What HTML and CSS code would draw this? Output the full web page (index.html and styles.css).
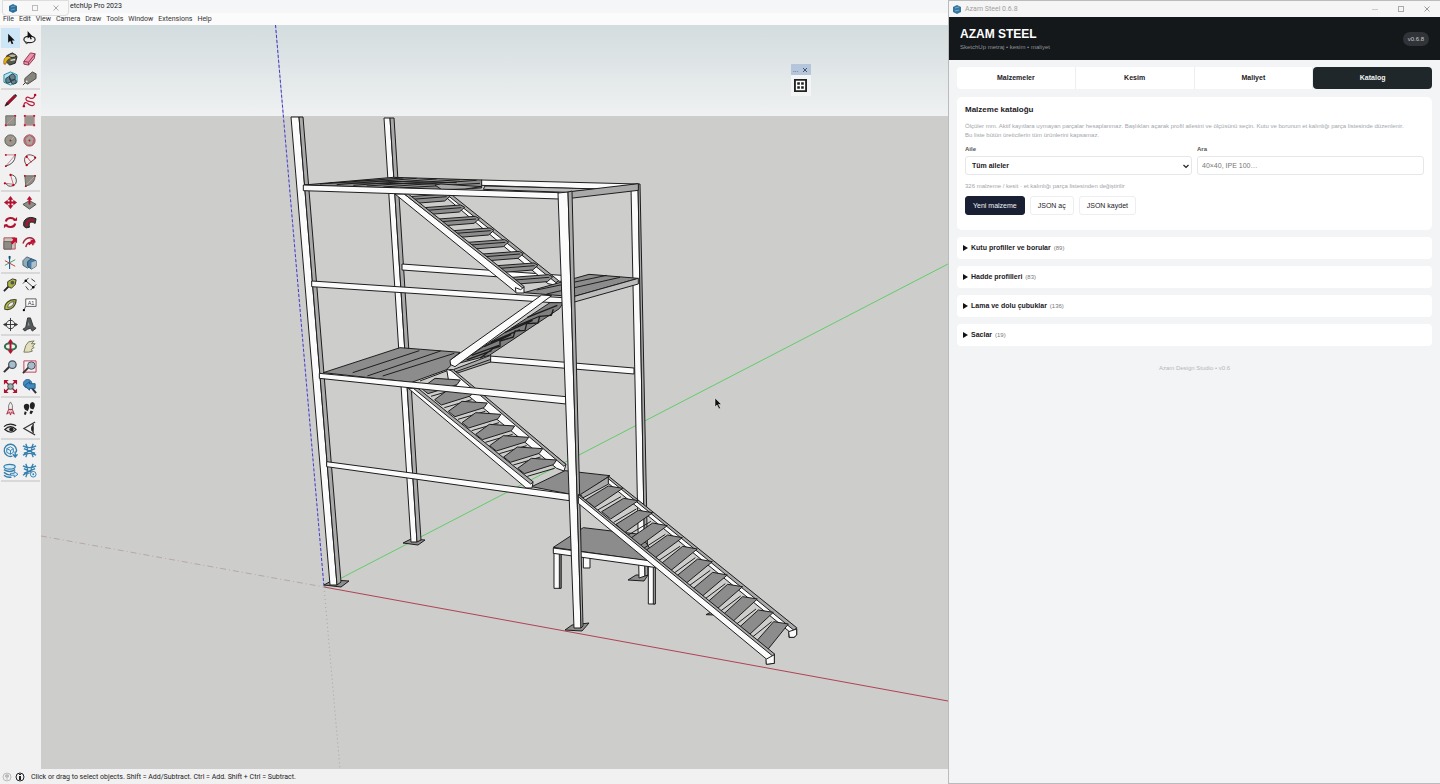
FILE: index.html
```html
<!DOCTYPE html>
<html lang="tr">
<head>
<meta charset="utf-8">
<meta name="viewport" content="width=device-width, initial-scale=1">
<title>SketchUp Pro 2023 – Azam Steel</title>
<link rel="stylesheet" href="styles.css">
</head>
<body>
<div class="desktop">
  <section class="modeler" lang="en">
    <header class="modeler-title">etchUp Pro 2023</header>
    <div class="mini-window">
      <svg class="glyph" viewBox="0 0 12 12"><path d="M6 2l4 2v5l-4 2-4-2V4z" fill="#2f6f9b"/><path d="M4 5l4-1M4 8l4-1" stroke="#6ca4c6"/></svg>
      <button type="button" aria-label="Restore"><svg class="glyph" viewBox="0 0 12 12"><rect x="3.500" y="3.500" width="5" height="5" fill="none" stroke="#bbb"/></svg></button>
      <button type="button" aria-label="Close"><svg class="glyph" viewBox="0 0 12 12"><path d="M3.500 3.500l5 5M8.500 3.500l-5 5" stroke="#aaa"/></svg></button>
    </div>
    <nav class="menu">
      <button type="button">File</button><button type="button">Edit</button><button type="button">View</button><button type="button">Camera</button><button type="button">Draw</button><button type="button">Tools</button><button type="button">Window</button><button type="button">Extensions</button><button type="button">Help</button>
    </nav>
    <div class="work">
      <aside class="tools">
        <div class="tool-group">
          <button type="button" class="active" aria-label="Select"><svg viewBox="0 0 16 16"><path d="M5.500 3v9.500l2.300-2 1.500 3.500 1.700-.8-1.500-3.200h3z" fill="#111"/></svg></button>
          <button type="button" aria-label="Lasso"><svg viewBox="0 0 16 16"><ellipse cx="8" cy="9" rx="6" ry="3.500" fill="none" stroke="#222" stroke-width="1.300"/><path d="M3 12q2 3 4 0" fill="none" stroke="#222"/><path d="M6 0v8l2-1.500 1.200 2.500 1.300-.6-1-2.400h2z" fill="#111"/></svg></button>
          <button type="button" aria-label="Paint Bucket"><svg viewBox="0 0 16 16"><path d="M4 5l6-3 5 4-2 7-6 2-4-4z" fill="#555b49" stroke="#222"/><ellipse cx="10" cy="5" rx="4" ry="2" fill="#b5b9a0" stroke="#222"/><path d="M1 14c-1-6 2-9 6-8l2 2c-4 0-5 2-6 6z" fill="#e8b11c" stroke="#674c05" stroke-width=".6"/><path d="M8 10l5-1" stroke="#ddd" stroke-width="1.500"/></svg></button>
          <button type="button" aria-label="Eraser"><svg viewBox="0 0 16 16"><path d="M2 11l7-9 5 1-1 5-6 7-5-1z" fill="#ec91aa" stroke="#8e3450"/><path d="M2 11l5 1 7-9M7 12v3" fill="none" stroke="#8e3450"/></svg></button>
          <button type="button" aria-label="Components"><svg viewBox="0 0 16 16"><path d="M1 4l7-3 7 3v8l-7 3-7-3z" fill="#b5e3ef" stroke="#238aa5"/><path d="M3 8l3-2 2 2v4l-3 1-2-1zM7 5l3-2 3 2v4l-3 1-3-1zM9 10l3-1 2 1v3l-3 1-2-1z" fill="#64818c" stroke="#243d48"/></svg></button>
          <button type="button" aria-label="Tag"><svg viewBox="0 0 16 16"><path d="M1 15l3-3" stroke="#333"/><path d="M3 8l8-7 4 2v5l-9 6-3-2z" fill="#85857d" stroke="#4b4b45"/><circle cx="5" cy="11" r="1" fill="#eee"/></svg></button>
        </div>
        <div class="tool-group">
          <button type="button" aria-label="Line"><svg viewBox="0 0 16 16"><path d="M2 14l2-4 8-8 2 2-8 8z" fill="#a80c28" stroke="#42151d" stroke-width=".6"/><path d="M2 14l2-4 2 2zM12 2l2 2 1-1-2-2z" fill="#222"/></svg></button>
          <button type="button" aria-label="Freehand"><svg viewBox="0 0 16 16"><path d="M2 14c0-5 3-4 5-2s7 2 6-1-6-1-8-3 0-5 3-3 6 0 6-4" fill="none" stroke="#b91e3d" stroke-width="1.300"/><circle cx="2" cy="14" r="1.300" fill="#b00b2c"/><circle cx="14" cy="2" r="1.300" fill="#b00b2c"/></svg></button>
          <button type="button" aria-label="Rectangle"><svg viewBox="0 0 16 16"><path d="M3 3h10v10H3z" fill="#96968e" stroke="#66665f"/><path d="M3 13L13 3" stroke="#c8a09f"/><path d="M2 12h2v2H2zM12 2h2v2h-2z" fill="#c1193a"/></svg></button>
          <button type="button" aria-label="Rotated Rectangle"><svg viewBox="0 0 16 16"><path d="M3 3h10v10H3z" fill="#96968e" stroke="#c8808d"/><path d="M2 2h2v2H2zM2 12h2v2H2zM12 12h2v2h-2zM12 2h2v2h-2z" fill="#c1193a"/></svg></button>
          <button type="button" aria-label="Circle"><svg viewBox="0 0 16 16"><circle cx="8" cy="8" r="6" fill="#97978d" stroke="#55554f"/><path d="M8 8l4-4" stroke="#c9ada8"/><circle cx="8" cy="8" r="1" fill="#a22"/></svg></button>
          <button type="button" aria-label="Polygon"><svg viewBox="0 0 16 16"><circle cx="8" cy="8" r="6" fill="#97978d" stroke="#a44a5a"/><path d="M8 2l5 4-2 7H5L3 6z" fill="#aaa198" stroke="#cb4660" stroke-width=".8"/><circle cx="8" cy="8" r="1" fill="#a22"/></svg></button>
          <button type="button" aria-label="Arc"><svg viewBox="0 0 16 16"><path d="M3 2h10L3 14" fill="none" stroke="#c38390"/><path d="M13 3q0 8-10 11" fill="none" stroke="#444"/><circle cx="3" cy="2" r="1" fill="#b01"/><circle cx="13" cy="2" r="1" fill="#b01"/><circle cx="3" cy="14" r="1" fill="#b01"/></svg></button>
          <button type="button" aria-label="Two Point Arc"><svg viewBox="0 0 16 16"><path d="M5 13C0 7 4 1 9 2s6 3 5 4z" fill="none" stroke="#6e3440"/><path d="M5 4l5 6" stroke="#c34158"/><circle cx="5" cy="13" r="1.200" fill="#b01"/><circle cx="14" cy="5" r="1.200" fill="#b01"/><circle cx="5" cy="4" r="1.200" fill="#b01"/></svg></button>
          <button type="button" aria-label="Three Point Arc"><svg viewBox="0 0 16 16"><path d="M8 2a6 6 0 1 1-5 9" fill="none" stroke="#444"/><path d="M8 2l3 10-9-1" fill="none" stroke="#c66b7b"/><circle cx="8" cy="2" r="1.200" fill="#b01"/><circle cx="11" cy="13" r="1.200" fill="#b01"/><circle cx="2" cy="11" r="1.200" fill="#b01"/></svg></button>
          <button type="button" aria-label="Pie"><svg viewBox="0 0 16 16"><path d="M3 3h11q0 9-10 11z" fill="#8e8e86" stroke="#66665f"/><path d="M5 12l8-8" stroke="#c9a4a4"/><circle cx="3" cy="3" r="1" fill="#b01"/><circle cx="14" cy="3" r="1" fill="#b01"/><circle cx="4" cy="14" r="1" fill="#b01"/></svg></button>
        </div>
        <div class="tool-group">
          <button type="button" aria-label="Move"><svg viewBox="0 0 16 16"><path d="M8 1l3 4H9v2h2V5l4 3-4 3V9H9v2h2l-3 4-3-4h2V9H5v2L1 8l4-3v2h2V5H5z" fill="#b1122f"/></svg></button>
          <button type="button" aria-label="Push Pull"><svg viewBox="0 0 16 16"><path d="M1 10l7-4 7 4-7 5z" fill="#8d9087" stroke="#4d504a"/><path d="M8 1l3 4H9v5H7V5H5z" fill="#b1122f"/></svg></button>
          <button type="button" aria-label="Rotate"><svg viewBox="0 0 16 16"><path d="M3 7c1-5 8-5 10-1M13 9c-1 5-8 5-10 1" fill="none" stroke="#b1122f" stroke-width="2.200"/><path d="M11 6h4V2zM5 10H1v4z" fill="#b1122f"/></svg></button>
          <button type="button" aria-label="Follow Me"><svg viewBox="0 0 16 16"><path d="M2 12C0 5 7 0 15 4l-1 5C9 6 7 8 8 13q-4 2-6-1z" fill="#4a3839" stroke="#222"/><path d="M5 12C4 7 8 4 13 6" fill="none" stroke="#b1122f" stroke-width="2"/></svg></button>
          <button type="button" aria-label="Scale"><svg viewBox="0 0 16 16"><path d="M1 3h12v12H1z" fill="#c9c6b9" stroke="#b44b5a"/><path d="M1 7h8v8H1z" fill="#8d8d84" stroke="#666"/><path d="M8 8l3-3-2-2h6v6l-2-2-3 3z" fill="#c00f30"/></svg></button>
          <button type="button" aria-label="Offset"><svg viewBox="0 0 16 16"><path d="M1 9C4 1 12 1 14 8M4 13c1-5 6-7 8-2" fill="none" stroke="#9c2739" stroke-width="1.500"/><path d="M6 9l4-3-2-1h6l-1 5-2-2-3 3z" fill="#c00f30"/></svg></button>
          <button type="button" aria-label="Axes"><svg viewBox="0 0 16 16"><path d="M7 1v14" stroke="#2a5d9d" stroke-width="1.200"/><path d="M2 11l11-6" stroke="#3a9a5e"/><path d="M2 6l11 6" stroke="#b33"/><path d="M6 1h2v3H6z" fill="#156"/></svg></button>
          <button type="button" aria-label="Outer Shell"><svg viewBox="0 0 16 16"><path d="M1 6l4-4 5 2v7l-4 3-5-3z" fill="#8faab9" stroke="#496371"/><path d="M6 7l4-3 5 2v6l-5 3-4-3z" fill="#487ca5" stroke="#28506f"/><path d="M10 8l5-2v6l-5 3z" fill="#b1bfc6"/></svg></button>
        </div>
        <div class="tool-group">
          <button type="button" aria-label="Tape Measure"><svg viewBox="0 0 16 16"><path d="M1 15l6-6" stroke="#222" stroke-width="2"/><path d="M5 5l5-3 4 1-1 5-4 4-4-2z" fill="#aeb63a" stroke="#333"/><circle cx="10" cy="6" r="2" fill="#555"/></svg></button>
          <button type="button" aria-label="Dimensions"><svg viewBox="0 0 16 16"><path d="M4 4l8 7M1 7l6-6M9 14l6-6M4 10l3 4M10 2l4 3" stroke="#333" fill="none"/><circle cx="4" cy="4" r="1.300"/><circle cx="12" cy="11" r="1.300"/></svg></button>
          <button type="button" aria-label="Protractor"><svg viewBox="0 0 16 16"><path d="M2 13C1 7 7 2 14 3c0 6-5 12-12 10z" fill="#b7bd49" stroke="#454822" stroke-width="1.200"/><path d="M5 11c0-3 3-6 7-6-1 4-3 6-7 6z" fill="#eee" stroke="#555"/></svg></button>
          <button type="button" aria-label="Text"><svg viewBox="0 0 16 16"><path d="M4 2h11v8H4zM4 10l-2 4" fill="#fff" stroke="#555"/><circle cx="2" cy="14" r="1.200"/><text x="6" y="8" font-size="6" font-family="Liberation Sans, sans-serif" fill="#333">A1</text></svg></button>
          <button type="button" aria-label="Section Plane"><svg viewBox="0 0 16 16"><circle cx="8" cy="8" r="4.500" fill="none" stroke="#333"/><path d="M1 8h14M8 1v14" stroke="#333"/><path d="M0 8l3-2v4zM16 8l-3-2v4z" fill="#333"/></svg></button>
          <button type="button" aria-label="3D Text"><svg viewBox="0 0 16 16"><path d="M6 1h3l3 9 3 2-4 3-2-3-3 1-3 2-2-2 3-2z" fill="#555b5b" stroke="#333"/><path d="M7 5l1 4H6z" fill="#999"/></svg></button>
        </div>
        <div class="tool-group">
          <button type="button" aria-label="Orbit"><svg viewBox="0 0 16 16"><ellipse cx="8" cy="8" rx="6" ry="3.500" fill="none" stroke="#32724d" stroke-width="2.200"/><path d="M8 2v12" fill="none" stroke="#b1122f" stroke-width="2"/><path d="M5 4l3-4 3 4zM5 12h6l-3 4z" fill="#b1122f"/></svg></button>
          <button type="button" aria-label="Pan"><svg viewBox="0 0 16 16"><path d="M2 14l2-7 3-4 6-1-3 3 4 0-3 3 2 1-3 2 1 2-4 1z" fill="#e1dfbd" stroke="#77775b"/></svg></button>
          <button type="button" aria-label="Zoom"><svg viewBox="0 0 16 16"><path d="M1 14l6-6" stroke="#333" stroke-width="2.200"/><circle cx="10" cy="6" r="4" fill="#a9bccb" stroke="#3f4f5b" stroke-width="1.300"/></svg></button>
          <button type="button" aria-label="Zoom Window"><svg viewBox="0 0 16 16"><path d="M2 2h13v12H2z" fill="none" stroke="#c43a54"/><path d="M1 15l6-6" stroke="#333" stroke-width="2"/><circle cx="10" cy="7" r="4" fill="#a9bccb" stroke="#3f4f5b"/></svg></button>
          <button type="button" aria-label="Zoom Extents"><svg viewBox="0 0 16 16"><path d="M3 3l10 10M13 3L3 13" stroke="#9c1632" stroke-width="1.500"/><path d="M1 1h5L1 6zM15 1v5l-5-5zM1 15v-5l5 5zM15 15h-5l5-5z" fill="#b1122f"/><circle cx="8" cy="8" r="3" fill="#9aafad" stroke="#3d4d4b"/></svg></button>
          <button type="button" aria-label="Previous"><svg viewBox="0 0 16 16"><path d="M10 9l5 6" stroke="#333" stroke-width="2.200"/><circle cx="6" cy="5" r="4.500" fill="#428abf" stroke="#2c618c"/><path d="M3 7l5-4v2h6v5H8v2z" fill="#428abf" stroke="#235b87"/></svg></button>
        </div>
        <div class="tool-group">
          <button type="button" aria-label="Position Camera"><svg viewBox="0 0 16 16"><path d="M8 1q3 3 2 8H6Q5 4 8 1z" fill="#eee" stroke="#777"/><path d="M6 9l-2 5 3-2 1 3 1-3 3 2-2-5z" fill="#eec0c7" stroke="#a62b41"/></svg></button>
          <button type="button" aria-label="Walk"><svg viewBox="0 0 16 16"><path d="M5 3c4 0 3 5 1 8L3 9C1 6 2 3 5 3zM3 11l2 1-1 3-2-1zM11 1c4 1 3 5 1 8L9 8C8 5 8 2 11 1zM9 10l3 1-2 3-2-1z" fill="#222"/></svg></button>
          <button type="button" aria-label="Look Around"><svg viewBox="0 0 16 16"><path d="M1 6c4-4 10-3 13-1M2 9q6-6 12 0-5 6-12 0z" fill="#ddd" stroke="#222" stroke-width="1.300"/><circle cx="9" cy="9" r="2.300" fill="#222"/></svg></button>
          <button type="button" aria-label="Field of View"><svg viewBox="0 0 16 16"><path d="M14 1L2 8l12 7" fill="none" stroke="#333" stroke-width="1.300"/><path d="M12 3q-3 5 0 10z" fill="#eee" stroke="#333"/><ellipse cx="11" cy="8" rx="1.300" ry="3" fill="#222"/></svg></button>
        </div>
        <div class="tool-group">
          <button type="button" aria-label="3D Warehouse"><svg viewBox="0 0 16 16"><path d="M10 14a6.500 6.500 0 1 1 4-4" fill="none" stroke="#347fae" stroke-width="1.500"/><path d="M4 6l4-2 3 2v4l-3 2-4-2zM4 6l4 2 3-2M8 8v4" fill="#deeff8" stroke="#347fae"/><path d="M13 9v5M10.500 12l2.500 3 2.500-3" fill="none" stroke="#347fae" stroke-width="1.500"/></svg></button>
          <button type="button" aria-label="Extension Warehouse"><svg viewBox="0 0 16 16"><path d="M1 3q7 4 14 0M1 13q7-4 14 0M2 6l12 5M14 6L2 11M4 1q4 7 0 14M12 1q-4 7 0 14" fill="none" stroke="#347fae" stroke-width="1.400"/></svg></button>
          <button type="button" aria-label="Send to LayOut"><svg viewBox="0 0 16 16"><ellipse cx="7" cy="4" rx="6" ry="2.500" fill="#d5ebf6" stroke="#347fae" stroke-width="1.300"/><path d="M1 7q6 4 12 0M1 10q5 4 8 2M1 13q4 3 8 2" fill="none" stroke="#347fae" stroke-width="1.500"/><path d="M8 11h4V9l4 3-4 3v-2H8z" fill="#d5ebf6" stroke="#347fae"/></svg></button>
          <button type="button" aria-label="Extension Manager"><svg viewBox="0 0 16 16"><path d="M1 3q7 4 14 0M1 13q4-3 7-2M2 6l8 4M14 6L2 11M4 1q4 7 0 14M12 1q-3 5-2 8" fill="none" stroke="#347fae" stroke-width="1.400"/><circle cx="12" cy="12" r="3" fill="#e5f4fa" stroke="#347fae"/><circle cx="12" cy="12" r="1" fill="#347fae"/></svg></button>
        </div>
      </aside>
      <main class="viewport">
        <svg class="scene" viewBox="41 25 907 744" preserveAspectRatio="xMidYMid slice" role="img" aria-label="Steel staircase model">
          <defs>
            <linearGradient id="sky" x1="0" y1="0" x2="0" y2="1"><stop offset="0" stop-color="#d3dcde"/><stop offset="1" stop-color="#eff1f2"/></linearGradient>
            <g id="treadA"><path d="M0 0l110-8 12 7-16 14-88 7z"/><path d="M8 8l104-8" fill="none"/></g>
            <g id="treadB"><path d="M0 0l-76-5-41 30 20 16 87-27z"/><path d="M-88 49l82-24" fill="none"/></g>
          </defs>
          <rect x="-400" y="25" width="1800" height="91" fill="url(#sky)"/>
          <rect x="-400" y="116" width="1800" height="900" fill="#cdcdcb"/>
          <g fill="none">
            <path d="M275.500 25L324 587" stroke="#b8b8e4"/>
            <path d="M275.500 25L324 587" stroke="#4540b8" stroke-dasharray="3 2"/>
            <path d="M324 587L948 264" stroke="#62cc6a"/>
            <path d="M324 587L948 701" stroke="#b04253"/>
            <path d="M324 587L340 769" stroke="#a5a5b2" stroke-dasharray="1 3"/>
            <path d="M41 536L324 587" stroke="#b7a7a5" stroke-dasharray="6 3 1 3"/>
          </g>
          <g class="solid">
            <!-- rear uprights -->
            <path class="dark" d="M403 543l8-4 14 1-7 5z"/>
            <path class="face" d="M384 118h6l27 424h-6z"/><path class="side" d="M390 118h4l27 422-4 2z"/>
            <path class="dark" d="M628 580l8-5h12l-4 6z"/>
            <path class="face" d="M631 187l7-3 7 392-6 2z"/><path class="side" d="M638 184h2l8 391-3 1z"/>
            <!-- rear beams -->
            <path class="face" d="M402 264l169 12v6l-169-12z"/>
            <path class="face" d="M490 356l144 12v6l-144-12z"/>
            <!-- front left upright -->
            <path class="dark" d="M324 585l9-5 16 1-8 6z"/>
            <path class="face" d="M291 117h8l38 468h-7z"/><path class="side" d="M299 117h4l38 465-4 3z"/>
          </g>
          <!-- small platform -->
          <g class="solid scaled" transform="translate(500 460) scale(.33333)">
            <path class="face" d="M250 290h20v34h-20zM445 320h20v112h-20zM162 278h21v107h-21z"/>
            <path class="side" d="M178 282h5v103h-5zM460 320h6v112h-6z"/>
            <path class="dark" d="M160 262l90-59 170 20 60 85z"/>
            <path class="face" d="M160 264l310 41v18l-310-43z"/>
            <path class="dark" d="M618 464l14-7 10 8z"/>
          </g>
          <g class="solid scaled" transform="translate(280 100) scale(.33333)">
            <!-- top deck -->
            <path class="face" d="M603 240l470 12-110 16-360-12z"/>
            <path class="light" d="M615 258l345 9-100 10-250-9z"/>
            <path class="dark" d="M72 255l268-23 265 8v24l-125 6z"/>
            <path d="M120 252l250-18M170 254l240-19M220 256l250-19M260 258l280-19M310 261l280-20M360 264l240-14M150 248l320 4M230 242l300 6" fill="none"/>
            <path class="side" d="M465 255l18-3 122 8-50 7-70 2z"/>
            <!-- flight from top deck -->
            <path class="face" d="M490 285h22l322 258-10 12-20-4z"/><path class="side" d="M502 285h14l320 257-8 6z"/>
            <g class="dark"><use href="#treadA" x="388" y="290"/><use href="#treadA" x="432" y="323"/><use href="#treadA" x="476" y="357"/><use href="#treadA" x="520" y="392"/><use href="#treadA" x="564" y="427"/><use href="#treadA" x="608" y="462"/><use href="#treadA" x="652" y="497"/><use href="#treadA" x="696" y="532"/></g>
            <!-- second level landing -->
            <path class="dark" d="M732 578l195-55 148 12-195 55z"/><path d="M800 582l220-50M770 570l210-44" fill="none"/>
            <path class="light" d="M880 590l195-55v17l-195 55z"/>
            <path class="face" d="M345 282h28l355 278 4 17h-24z"/><path class="side" d="M373 282h12l348 278-5 4z"/>
            <path class="face" d="M706 563l16 6 10-8v18h-24z"/>
            <path class="face" d="M95 543l753 50v17L95 560z"/>
            <path class="side" d="M870 275l205-24v20l-205 24z"/>
            <path class="face" d="M70 255l768 23v19L70 272z"/>
          </g>
          <g class="solid scaled" transform="translate(280 300) scale(.33333)">
            <!-- underside of the rising flight -->
            <path class="mid" d="M535 190L810 8h40l-12 18-210 140z"/>
            <path d="M560 180l75-28M575 166l82-30M612 140l82-36M632 127l88-38M674 98l84-37M695 84l85-36M742 52l90-36M600 175l40-30 20-6 0-16 40-12 5-18 30-2 5-20 34-2 5-20 35-3 6-18" fill="none" stroke-width="4"/>
            <path class="face" d="M508 182L785-15l30 2L525 200l-13-6z"/>
            <!-- third level landing -->
            <path class="dark" d="M130 218l230-75 180 14-30 24 2 16-12 12-105 38z"/>
            <path d="M218 218l200-66M262 228l220-75M308 228l215-68M420 243l90-34" fill="none"/>
            <path class="side" d="M522 208l110-42v20l-108 36z"/><path d="M525 216l108-38" fill="none"/>
            <!-- middle flight -->
            <path class="face" d="M500 208l18 5 340 280-6 20-22-8-325-267z"/>
            <path class="side" d="M510 209h10l338 284-6 6z"/>
            <g class="dark"><use href="#treadB" x="541" y="240"/><use href="#treadB" x="581" y="274"/><use href="#treadB" x="622" y="309"/><use href="#treadB" x="663" y="343"/><use href="#treadB" x="704" y="378"/><use href="#treadB" x="746" y="412"/><use href="#treadB" x="788" y="446"/><use href="#treadB" x="830" y="480"/></g>
            <!-- lower landing -->
            <path class="dark" d="M755 560l100-48 135 15-90 60-32-5z"/>
            <path class="face" d="M385 265h22l352 283-3 16h-18z"/><path class="side" d="M400 265h14l346 281-8 6z"/>
            <path class="face" d="M118 220l740 70v22L118 235z"/>
            <path class="face" d="M140 485l728 97v20L140 500z"/>
          </g>
          <g class="solid">
            <!-- front right upright -->
            <path class="dark" d="M565 630l7-5 17-2-7 8z"/>
            <path class="face" d="M558 193l10-1 13 436h-7z"/><path class="side" d="M568 192l4-1 11 435-2 2z"/>
          </g>
          <!-- ground flight -->
          <g class="solid scaled" transform="translate(500 460) scale(.33333)">
            <path class="side" d="M242 103l84-53v22l-78 42z"/>
            <path class="face" d="M325 50l565 455v20l-8 7h-15v-18L325 70z"/>
            <path class="side" d="M325 48l565 455-8 8L325 56z"/>
            <path class="face" d="M866 515l24-8v18l-8 7h-14z"/>
            <g class="dark">
              <path d="M368 85l-43-7-69 42 28 22z"/><path d="M415 122l-44-7-66 40 27 22z"/><path d="M458 158l-43-7-67 42 27 24z"/><path d="M502 197l-44-8-65 45 26 24z"/><path d="M547 233l-44-8-65 46 28 22z"/><path d="M592 267l-44-8-62 50 26 23z"/><path d="M637 305l-44-8-62 50 26 24z"/><path d="M682 345l-44-8-60 50 27 23z"/><path d="M728 380l-45-7-59 52 27 22z"/><path d="M772 417l-44-7-58 53 28 22z"/><path d="M820 457l-45-7-57 52 30 22z"/><path d="M865 492l-44-7-53 60 35 24z"/>
            </g>
            <g fill="none">
              <path d="M293 150l70-40M341 187l68-40M383 226l70-42M428 267l68-44M474 303l66-44M520 341l66-48M565 379l66-48M612 419l64-48M658 456l64-48M706 495l62-48M755 533l60-48"/>
            </g>
            <path class="face" d="M235 105l588 480v25l-24 2v-15L235 130z"/>
            <path class="side" d="M235 103l590 480-7 5L235 110z"/>
            <path class="face" d="M798 598l25-14v26l-24 3z"/>
          </g>
          <path d="M715 398v9l2-2 2 4 1.500-1-2-3.500h3z" fill="#111" stroke="#eee" stroke-width=".5"/>
        </svg>
        <div class="float-bar">
          <div class="float-title"><span>...</span><svg class="mini" viewBox="0 0 8 8"><path d="M2 2l4 4M6 2L2 6" stroke="#456"/></svg></div>
          <button type="button" aria-label="Azam Steel"><svg viewBox="0 0 14 14"><path d="M1 1h12v12H1z" fill="#fff" stroke="#222" stroke-width="2"/><path d="M3.500 3.500h2.800v2.800H3.500zM7.700 3.500h2.800v2.800H7.700zM3.500 7.700h2.800v2.800H3.500zM7.700 7.700h2.800v2.800H7.700z" fill="#222"/></svg></button>
        </div>
      </main>
    </div>
    <footer class="status">
      <svg class="glyph" viewBox="0 0 12 12"><circle cx="6" cy="6" r="4" fill="none" stroke="#bbb"/><path d="M6 3v6M4.500 4h3v2h-3z" stroke="#bbb" fill="#bbb"/></svg>
      <svg class="glyph" viewBox="0 0 12 12"><circle cx="6" cy="6" r="4" fill="none" stroke="#222"/><path d="M6 5v4M6 3v1" stroke="#222" stroke-width="2"/></svg>
      <span class="hint">Click or drag to select objects. Shift = Add/Subtract. Ctrl = Add. Shift + Ctrl = Subtract.</span>
    </footer>
  </section>

  <section class="panel">
    <header class="panel-title">
      <svg class="glyph" viewBox="0 0 12 12"><path d="M6 2l4 2v5l-4 2-4-2V4z" fill="#35759f"/><path d="M4 5l4-1M4 8l4-1" stroke="#79abc9"/></svg>
      <span>Azam Steel 0.6.8</span>
      <div class="controls">
        <button type="button" aria-label="Küçült"><svg class="glyph" viewBox="0 0 12 12"><path d="M3 6.500h6" stroke="#ccc"/></svg></button>
        <button type="button" aria-label="Büyüt"><svg class="glyph" viewBox="0 0 12 12"><rect x="3.500" y="3.500" width="5" height="5" fill="none" stroke="#aaa"/></svg></button>
        <button type="button" aria-label="Kapat"><svg class="glyph" viewBox="0 0 12 12"><path d="M3.500 3.500l5 5M8.500 3.500l-5 5" stroke="#999"/></svg></button>
      </div>
    </header>
    <div class="brand">
      <div>
        <h1>AZAM STEEL</h1>
        <p>SketchUp metraj • kesim • maliyet</p>
      </div>
      <span class="version">v0.6.8</span>
    </div>
    <div class="content">
      <nav class="tabs">
        <button type="button">Malzemeler</button><button type="button">Kesim</button><button type="button">Maliyet</button><button type="button" class="selected">Katalog</button>
      </nav>
      <section class="card">
        <h2>Malzeme kataloğu</h2>
        <p class="note">Ölçüler mm. Aktif kayıtlara uymayan parçalar hesaplanmaz. Başlıkları açarak profil ailesini ve ölçüsünü seçin. Kutu ve borunun et kalınlığı parça listesinde düzenlenir.<br>Bu liste bütün üreticilerin tüm ürünlerini kapsamaz.</p>
        <div class="filters">
          <div class="field">
            <label for="family">Aile</label>
            <div class="select-wrap">
              <select id="family"><option>Tüm aileler</option></select>
              <svg class="chevron" viewBox="0 0 8 8"><path d="M1.500 3L4 5.500 6.500 3" fill="none" stroke="#222" stroke-width="1.200"/></svg>
            </div>
          </div>
          <div class="field">
            <label for="search">Ara</label>
            <input id="search" type="text" placeholder="40×40, IPE 100…">
          </div>
        </div>
        <p class="summary-line">326 malzeme / kesit · et kalınlığı parça listesinden değiştirilir</p>
        <div class="actions">
          <button type="button" class="primary">Yeni malzeme</button>
          <button type="button">JSON aç</button>
          <button type="button">JSON kaydet</button>
        </div>
      </section>
      <div class="groups">
        <details><summary>Kutu profiller ve borular <small>(89)</small></summary></details>
        <details><summary>Hadde profilleri <small>(83)</small></summary></details>
        <details><summary>Lama ve dolu çubuklar <small>(136)</small></summary></details>
        <details><summary>Saclar <small>(19)</small></summary></details>
      </div>
      <p class="credit">Azam Design Studio • v0.6</p>
    </div>
  </section>
</div>
</body>
</html>
```

FILE: styles.css
```css
* { box-sizing: border-box; }

body {
  margin: 0;
  font-family: "Liberation Sans", Arial, sans-serif;
  font-size: 7px;
  line-height: 8px;
  color: #1c2024;
}

button, input, select { font: inherit; color: inherit; }
button { padding: 0; border: 0; background: none; }
h1, h2, p { margin: 0; }
svg { display: block; }

.glyph { width: 12px; height: 12px; flex: none; }

.desktop {
  display: grid;
  grid-template-columns: 79fr 41fr;
  min-height: 100vh;
}

/* Modeler window */
.modeler {
  position: relative;
  display: flex;
  flex-direction: column;
  min-width: 0;
  background: #f2f2f2;
  font-family: Roboto, "Open Sans", sans-serif;
}

.modeler-title {
  height: 13px;
  padding-left: 70px;
  line-height: 13px;
  background: #f4f6f8;
  color: #222;
}

.mini-window {
  position: absolute;
  top: 0;
  left: 2px;
  display: flex;
  align-items: center;
  justify-content: space-between;
  width: 67px;
  height: 16px;
  padding: 0 6px 0 4px;
  background: #f8f8f9;
  border: 1px solid #ddd;
  border-radius: 0 0 4px 4px;
}

.menu {
  display: flex;
  gap: 5px;
  height: 12px;
  padding-left: 3px;
  background: #fbfbfb;
  line-height: 12px;
  color: #333;
}

.work { display: flex; flex: 1; min-height: 0; }

.tools {
  width: 41px;
  flex: none;
  padding: 3px 1px 0;
  background: #f1f1f1;
}

.tool-group {
  display: grid;
  grid-template-columns: 19px 19px;
  grid-auto-rows: 20px;
  border-bottom: 2px solid #d8d8d8;
}

.tool-group button { display: grid; place-items: center; }
.tool-group svg { width: 15px; height: 15px; }
.tool-group .active { background: #cce6f7; }

.viewport { position: relative; flex: 1; min-width: 0; background: #cdcdcb; }
.scene { position: absolute; width: 100%; height: 100%; }

.solid { stroke: #1d1d1d; stroke-width: 1; stroke-linejoin: round; }
.scaled { stroke-width: 3; }
.face { fill: #fbfbfb; }
.side { fill: #a9a9a9; }
.light { fill: #bcbcbc; }
.mid { fill: #808080; }
.dark { fill: #8c8c8c; }

.float-bar {
  position: absolute;
  top: 5%;
  left: 82%;
  width: 20px;
  margin-left: 6px;
  margin-top: 2px;
  background: #f3f4f5;
}

.float-title {
  display: flex;
  align-items: center;
  justify-content: space-between;
  height: 11px;
  padding: 0 2px;
  background: #b4c5dc;
  color: #456;
}

.mini { width: 8px; height: 8px; }
.float-bar button { display: grid; place-items: center; width: 100%; height: 21px; }
.float-bar button svg { width: 13px; height: 13px; }

.status {
  display: flex;
  align-items: center;
  gap: 1px;
  height: 15px;
  padding-left: 1px;
  background: #f1f1f1;
  color: #222;
}

.hint { margin-left: 4px; }

/* Extension panel */
.panel {
  min-width: 0;
  background: #f2f4f6;
  border: 1px solid #bbb;
  border-right: 0;
}

.panel-title {
  display: flex;
  align-items: center;
  gap: 2px;
  height: 16px;
  padding: 0 7px 0 2px;
  background: #f5f5f5;
  font-family: Roboto, "Open Sans", sans-serif;
  color: #a0a0a0;
}

.controls { display: flex; gap: 14px; margin-left: auto; }

.brand {
  display: flex;
  align-items: center;
  justify-content: space-between;
  padding: 10px 11px 9px;
  background: #14181b;
}

.brand h1 { font-size: 12px; line-height: 14px; color: #fff; }
.brand p { margin-top: 2px; font-size: 6px; color: #8f9397; }

.version {
  padding: 3px 5px;
  border-radius: 8px;
  background: #303438;
  font-size: 6px;
  color: #c8cacc;
}

.content { padding: 7px 8px; }

.tabs {
  display: grid;
  grid-template-columns: repeat(4, 1fr);
  background: #fff;
  border-radius: 4px;
}

.tabs button {
  height: 22px;
  border-right: 1px solid #eceff1;
  font-weight: 700;
}

.tabs .selected { border: 0; border-radius: 4px; background: #20272b; color: #f0f2f3; }

.card {
  margin-top: 8px;
  padding: 8px 8px 15px;
  background: #fff;
  border-radius: 5px;
}

.card h2 { font-size: 8px; line-height: 10px; }

.note { margin-top: 7px; font-size: 6px; line-height: 9px; color: #a2a6aa; }

.filters {
  display: grid;
  grid-template-columns: 1fr 1fr;
  gap: 5px;
  margin-top: 5px;
}

.field label { display: block; font-size: 6px; font-weight: 700; color: #555; }

.field input, .field select {
  display: block;
  width: 100%;
  height: 19px;
  margin-top: 3px;
  border: 1px solid #e5e7e9;
  border-radius: 3px;
  background: #fff;
}

.field select { padding: 0 6px; appearance: none; font-weight: 700; }
.field input { padding: 0 4px; }
.field input::placeholder { color: #777; opacity: 1; }

.select-wrap { position: relative; }
.chevron { position: absolute; top: 6px; right: 2px; width: 8px; height: 8px; pointer-events: none; }

.summary-line { margin-top: 7px; font-size: 6px; color: #a2a6aa; }

.actions { display: flex; gap: 5px; margin-top: 6px; }

.actions button {
  height: 19px;
  padding: 0 7px;
  border: 1px solid #eceef0;
  border-radius: 3px;
  background: #fff;
}

.actions .primary { border-color: #1a2033; background: #1a2033; color: #f0f1f4; }

.groups { display: grid; gap: 7px; margin-top: 7px; }
.groups details { background: #fff; border-radius: 4px; }

.groups summary {
  display: flex;
  align-items: center;
  gap: 3px;
  height: 22px;
  padding-left: 6px;
  font-weight: 700;
}

.groups summary::before {
  content: "";
  border-left: 5px solid #111;
  border-top: 3px solid transparent;
  border-bottom: 3px solid transparent;
}

.groups small { font-size: 6px; font-weight: 400; color: #777; }

.credit { margin-top: 18px; font-size: 6px; text-align: center; color: #b5b8bb; }
```
